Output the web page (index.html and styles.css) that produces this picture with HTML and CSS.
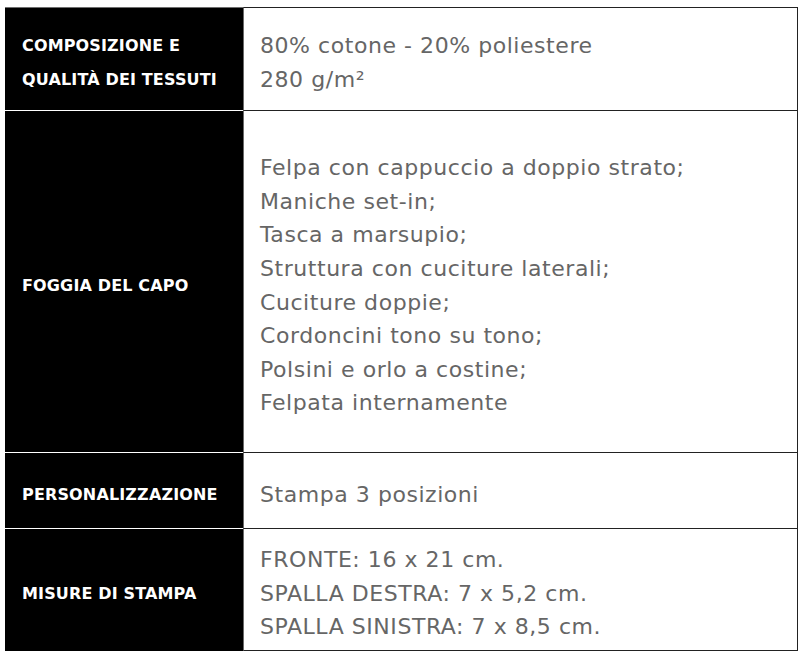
FILE: index.html
```html
<!DOCTYPE html>
<html lang="it">
<head>
<meta charset="utf-8">
<title>Scheda tecnica</title>
<link rel="stylesheet" href="styles.css">
</head>
<body>
<div class="specs">
  <div class="label first"><span>COMPOSIZIONE E<br>QUALITÀ DEI TESSUTI</span></div>
  <div class="value first"><span>80% cotone - 20% poliestere<br>280 g/m²</span></div>

  <div class="label"><span>FOGGIA DEL CAPO</span></div>
  <div class="value"><span>Felpa con cappuccio a doppio strato;<br>Maniche set-in;<br>Tasca a marsupio;<br>Struttura con cuciture laterali;<br>Cuciture doppie;<br>Cordoncini tono su tono;<br>Polsini e orlo a costine;<br>Felpata internamente</span></div>

  <div class="label"><span>PERSONALIZZAZIONE</span></div>
  <div class="value"><span>Stampa 3 posizioni</span></div>

  <div class="label last"><span>MISURE DI STAMPA</span></div>
  <div class="value last"><span>FRONTE: 16 x 21 cm.<br>SPALLA DESTRA: 7 x 5,2 cm.<br>SPALLA SINISTRA: 7 x 8,5 cm.</span></div>
</div>
</body>
</html>
```
FILE: styles.css
```css
html, body {
  margin: 0;
  padding: 0;
  background: #fff;
}

.specs {
  display: grid;
  grid-template-columns: 238px 555px;
  grid-template-rows: 103px 342px 76px 123px;
  width: 793px;
  margin: 7px 0 0 5px;
}

.label,
.value {
  box-sizing: border-box;
  display: flex;
  flex-direction: column;
  justify-content: center;
  padding-top: 8px;
  line-height: 33.6px;
}

.label {
  background: #000;
  color: #fff;
  border-top: 1px solid #fff;
  padding-left: 17px;
  padding-right: 8px;
  font-family: "DejaVu Sans", sans-serif;
  font-weight: 700;
  font-size: 16px;
  letter-spacing: 0.15px;
}

.label.first {
  border-top-color: #6e6e6e;
}

.value {
  border-top: 1px solid #222;
  border-right: 1px solid #222;
  border-left: 1px solid #6a6a6a;
  padding-left: 16px;
  padding-right: 16px;
  color: #666;
  font-family: "DejaVu Sans", sans-serif;
  font-size: 22px;
  letter-spacing: 0.55px;
}

.value.last {
  border-bottom: 1px solid #222;
}
```
